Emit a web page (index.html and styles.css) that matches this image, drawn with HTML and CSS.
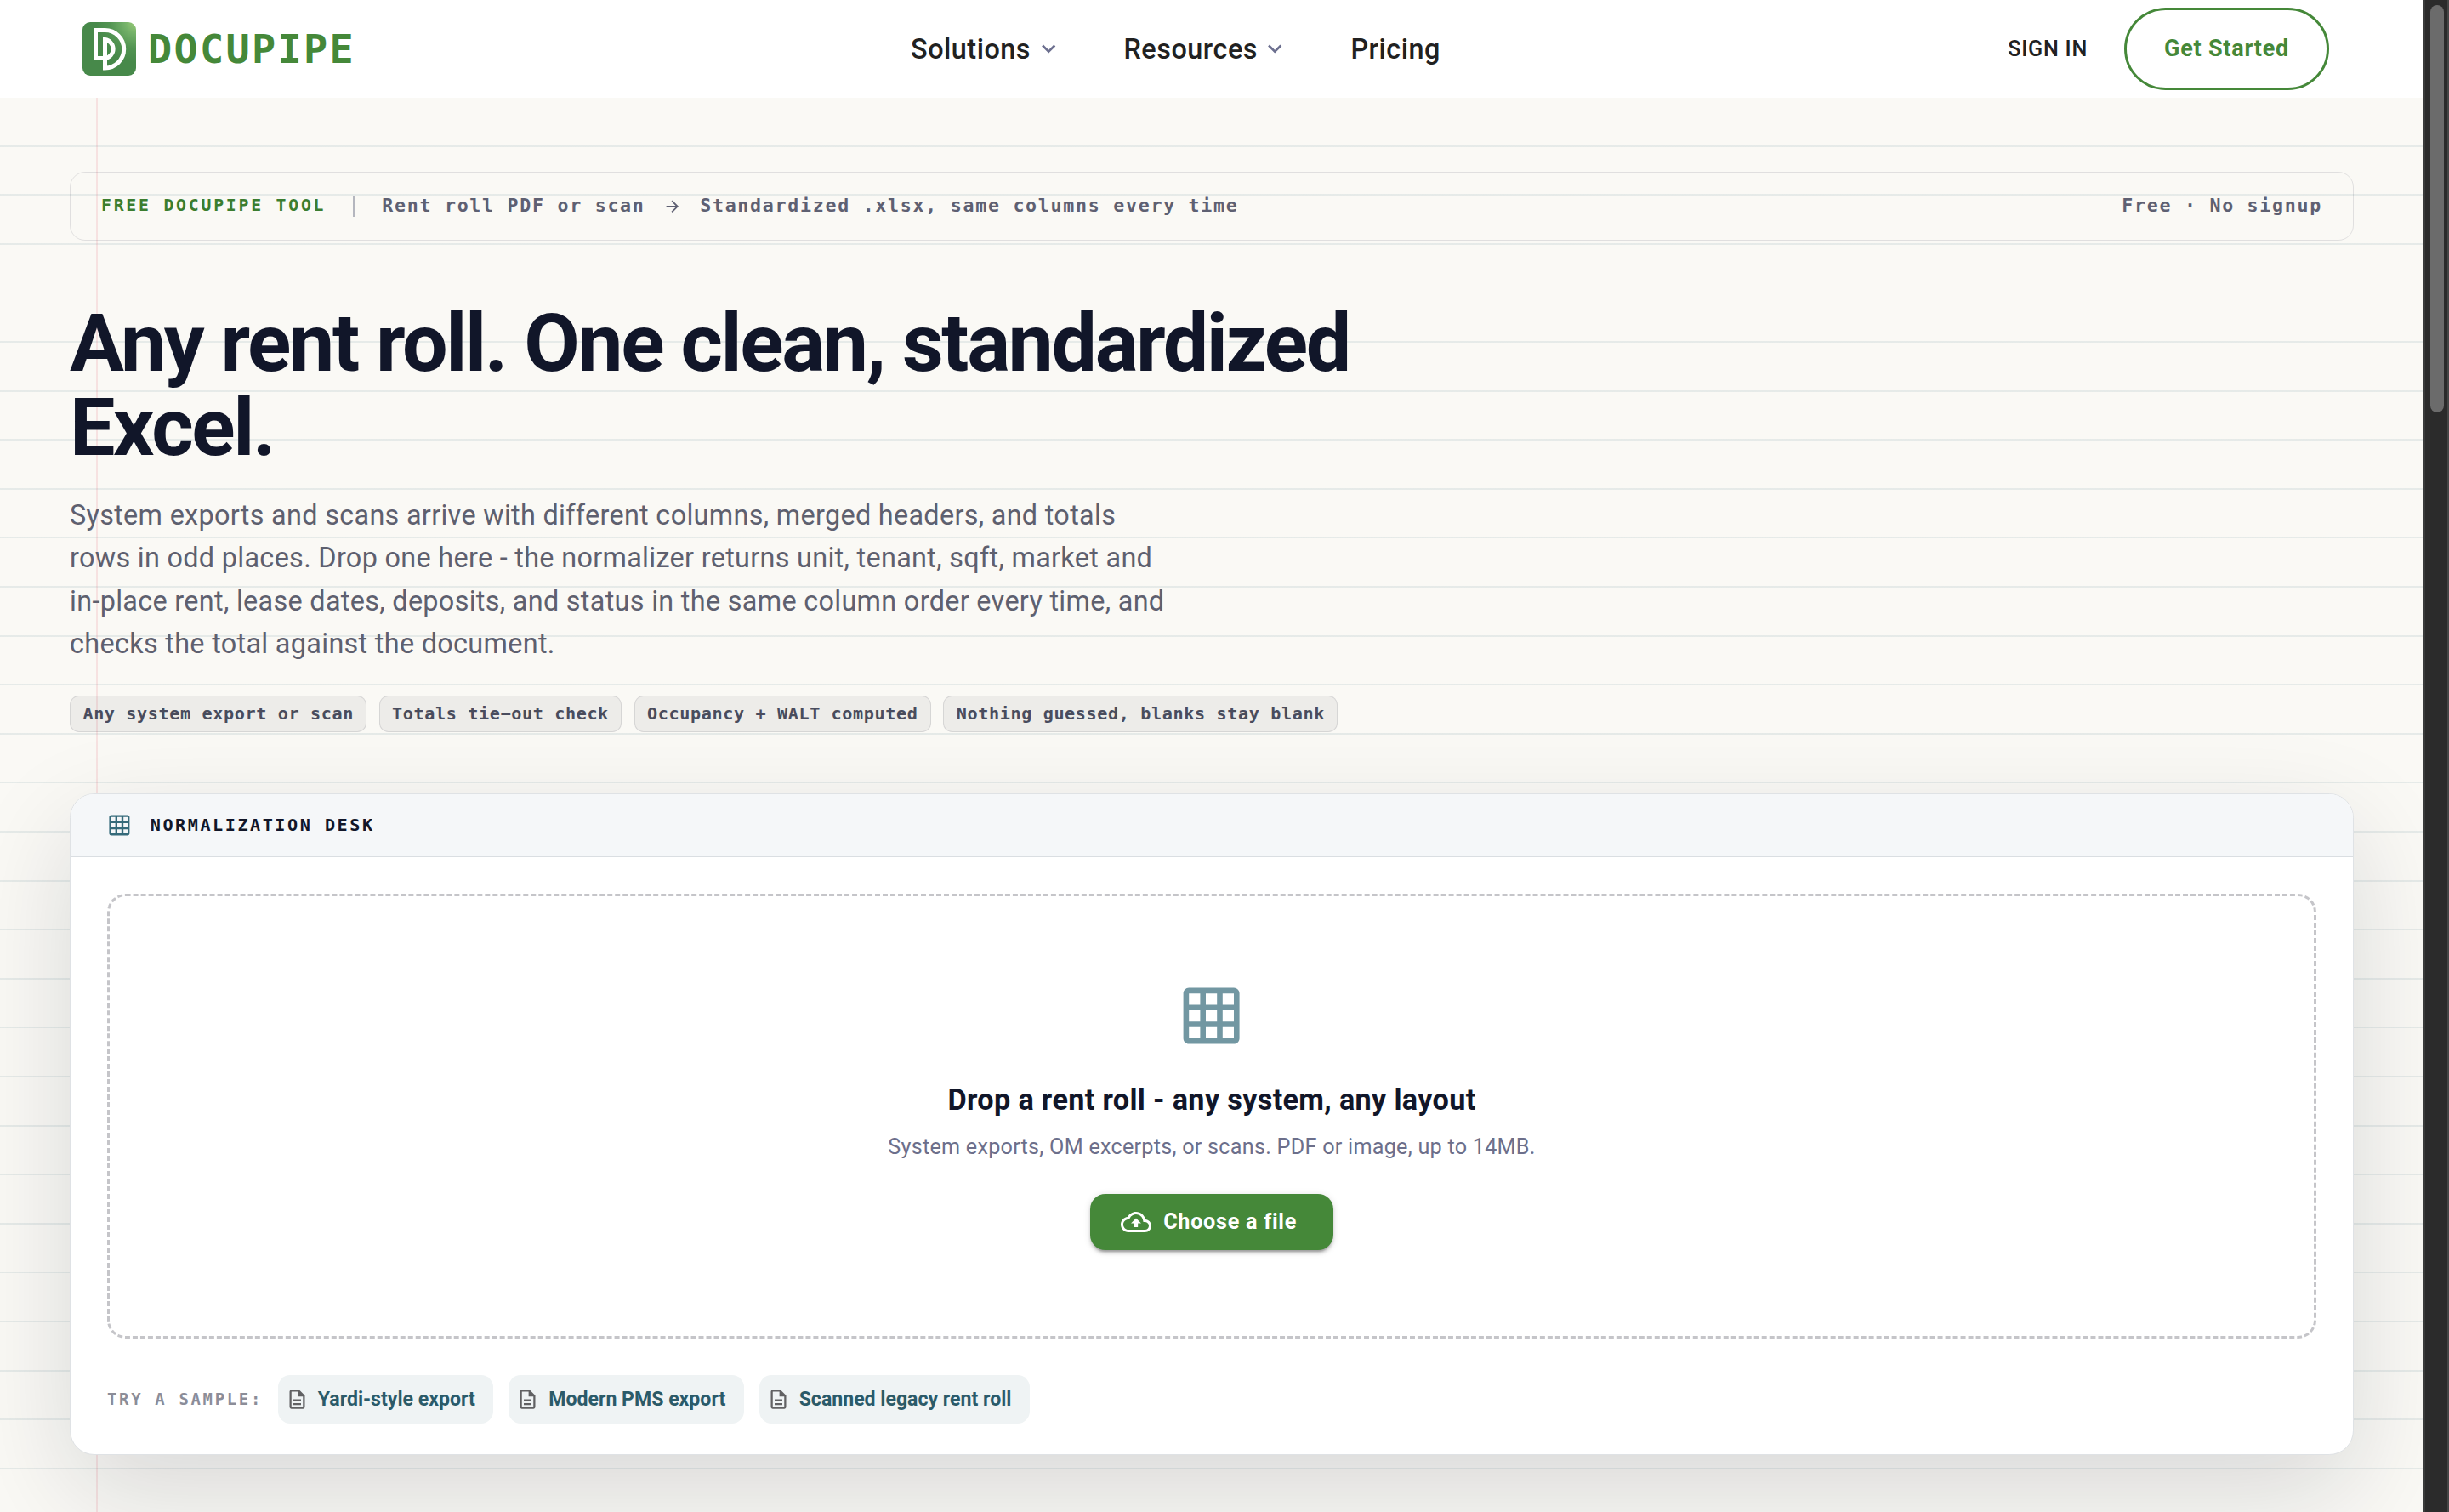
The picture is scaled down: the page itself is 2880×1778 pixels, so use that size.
FILE: index.html
```
<!DOCTYPE html>
<html lang="en">
<head>
<meta charset="UTF-8">
<meta name="viewport" content="width=device-width, initial-scale=1.0">
<title>Rent Roll Normalizer - DocuPipe</title>
<link rel="stylesheet" href="styles.css">
</head>
<body>
<div class="page">
    <header class="topbar">
        <a class="brand">
            <svg class="brand-mark" viewBox="0 0 63 63">
                <defs>
                    <radialGradient id="markFill" cx="1" cy="0" r="0.75">
                        <stop offset="0" stop-color="#9acb78"/>
                        <stop offset="0.3" stop-color="#72b068"/>
                        <stop offset="0.65" stop-color="#529452"/>
                        <stop offset="1" stop-color="#47894a"/>
                    </radialGradient>
                </defs>
                <rect width="63" height="63" rx="9" fill="url(#markFill)"/>
                <path d="M26.5 42.6H15.5V9.6H26.5A22.2 22.2 0 0 1 26.5 54V20.6A11.1 11.1 0 0 1 26.5 42.6" fill="none" stroke="#fff" stroke-width="5"/>
            </svg>
            <span class="brand-name">DOCUPIPE</span>
        </a>
        <nav class="menu">
            <a class="menu-item">Solutions
                <svg class="chevron" viewBox="0 0 24 24"><path d="M7.41 8.59 12 13.17l4.59-4.58L18 10l-6 6-6-6z"/></svg>
            </a>
            <a class="menu-item">Resources
                <svg class="chevron" viewBox="0 0 24 24"><path d="M7.41 8.59 12 13.17l4.59-4.58L18 10l-6 6-6-6z"/></svg>
            </a>
            <a class="menu-item">Pricing</a>
        </nav>
        <div class="account">
            <a class="sign-in">SIGN IN</a>
            <button class="get-started">Get Started</button>
        </div>
    </header>

    <main class="ledger">
        <div class="strip">
            <span class="strip-tag">FREE DOCUPIPE TOOL</span>
            <span class="strip-divider"></span>
            <span class="strip-text">Rent roll PDF or scan</span>
            <svg class="strip-arrow" viewBox="0 0 24 24"><path d="m12 4-1.41 1.41L16.17 11H4v2h12.17l-5.58 5.59L12 20l8-8z"/></svg>
            <span class="strip-text">Standardized .xlsx, same columns every time</span>
            <span class="strip-text strip-end">Free · No signup</span>
        </div>

        <h1>Any rent roll. One clean, standardized Excel.</h1>
        <p class="lead">System exports and scans arrive with different columns, merged headers, and totals rows in odd places. Drop one here - the normalizer returns unit, tenant, sqft, market and in-place rent, lease dates, deposits, and status in the same column order every time, and checks the total against the document.</p>

        <div class="facts">
            <span class="fact">Any system export or scan</span>
            <span class="fact">Totals tie−out check</span>
            <span class="fact">Occupancy + WALT computed</span>
            <span class="fact">Nothing guessed, blanks stay blank</span>
        </div>

        <section class="desk">
            <div class="desk-head">
                <svg class="desk-icon" viewBox="0 0 24 24"><path d="M20 2H4c-1.1 0-2 .9-2 2v16c0 1.1.9 2 2 2h16c1.1 0 2-.9 2-2V4c0-1.1-.9-2-2-2M8 20H4v-4h4zm0-6H4v-4h4zm0-6H4V4h4zm6 12h-4v-4h4zm0-6h-4v-4h4zm0-6h-4V4h4zm6 12h-4v-4h4zm0-6h-4v-4h4zm0-6h-4V4h4z"/></svg>
                <span>NORMALIZATION DESK</span>
            </div>
            <div class="desk-body">
                <div class="dropzone">
                    <svg class="drop-icon" viewBox="0 0 24 24"><path d="M20 2H4c-1.1 0-2 .9-2 2v16c0 1.1.9 2 2 2h16c1.1 0 2-.9 2-2V4c0-1.1-.9-2-2-2M8 20H4v-4h4zm0-6H4v-4h4zm0-6H4V4h4zm6 12h-4v-4h4zm0-6h-4v-4h4zm0-6h-4V4h4zm6 12h-4v-4h4zm0-6h-4v-4h4zm0-6h-4V4h4z"/></svg>
                    <h2>Drop a rent roll - any system, any layout</h2>
                    <p class="drop-hint">System exports, OM excerpts, or scans. PDF or image, up to 14MB.</p>
                    <button class="choose">
                        <svg class="choose-icon" viewBox="0 0 24 24"><path d="M19.35 10.04C18.67 6.59 15.64 4 12 4 9.11 4 6.6 5.64 5.35 8.04 2.34 8.36 0 10.91 0 14c0 3.31 2.69 6 6 6h13c2.76 0 5-2.24 5-5 0-2.64-2.05-4.78-4.65-4.96M19 18H6c-2.21 0-4-1.79-4-4 0-2.05 1.53-3.76 3.56-3.97l1.07-.11.5-.95C8.08 7.14 9.94 6 12 6c2.62 0 4.88 1.86 5.39 4.43l.3 1.5 1.53.11c1.56.1 2.78 1.41 2.78 2.96 0 1.65-1.35 3-3 3M8 13h2.55v3h2.9v-3H16l-4-4z"/></svg>
                        <span>Choose a file</span>
                    </button>
                </div>
                <div class="samples">
                    <span class="samples-label">TRY A SAMPLE:</span>
                    <a class="sample">
                        <svg class="sample-icon" viewBox="0 0 24 24"><path d="M8 16h8v2H8zm0-4h8v2H8zm6-10H6c-1.1 0-2 .9-2 2v16c0 1.1.89 2 1.99 2H18c1.1 0 2-.9 2-2V8zm4 18H6V4h7v5h5z"/></svg>
                        <span>Yardi-style export</span>
                    </a>
                    <a class="sample">
                        <svg class="sample-icon" viewBox="0 0 24 24"><path d="M8 16h8v2H8zm0-4h8v2H8zm6-10H6c-1.1 0-2 .9-2 2v16c0 1.1.89 2 1.99 2H18c1.1 0 2-.9 2-2V8zm4 18H6V4h7v5h5z"/></svg>
                        <span>Modern PMS export</span>
                    </a>
                    <a class="sample">
                        <svg class="sample-icon" viewBox="0 0 24 24"><path d="M8 16h8v2H8zm0-4h8v2H8zm6-10H6c-1.1 0-2 .9-2 2v16c0 1.1.89 2 1.99 2H18c1.1 0 2-.9 2-2V8zm4 18H6V4h7v5h5z"/></svg>
                        <span>Scanned legacy rent roll</span>
                    </a>
                </div>
            </div>
        </section>
    </main>
</div>
<div class="scrollbar"><div class="scroll-thumb"></div></div>
</body>
</html>
```
FILE: styles.css
```
* { margin: 0; padding: 0; box-sizing: border-box; }
body {
    display: flex;
    height: 1778px;
    overflow: hidden;
    background: #faf9f5;
    font-family: Roboto, "Liberation Sans", sans-serif;
    color: #111629;
}
button { font-family: inherit; cursor: pointer; }
svg { display: block; flex-shrink: 0; }
.page {
    flex: 1;
    display: flex;
    flex-direction: column;
    overflow: hidden;
}

/* top bar */
.topbar {
    display: grid;
    grid-template-columns: 974px 1fr auto;
    align-items: center;
    flex-shrink: 0;
    height: 115px;
    padding: 0 111px 0 97px;
    background: #fff;
}
.brand { display: flex; align-items: center; gap: 14px; }
.brand-mark { width: 63px; height: 63px; }
.brand-name {
    font: bold 46.8px/56px "DejaVu Sans Mono", monospace;
    letter-spacing: 0.05em;
    color: #458839;
}
.menu { display: flex; gap: 72.5px; }
.menu-item {
    display: flex; align-items: center; gap: 4.5px;
    font-size: 32.4px; font-weight: 500;
    letter-spacing: 0.016em;
    color: #212121;
}
.chevron { width: 32.4px; height: 32.4px; fill: #6c6f8f; }
.account { display: flex; align-items: center; gap: 43px; }
.sign-in {
    font-size: 25.2px; font-weight: 500;
    letter-spacing: 0.0286em;
    color: #212121;
}
.get-started {
    width: 241px; height: 97px;
    padding-bottom: 1px;
    border: 3px solid #458839; border-radius: 49px;
    background: #fff; color: #458839;
    font-size: 27px; font-weight: 700;
    letter-spacing: 0.0286em;
}

/* ruled paper */
.ledger {
    flex: 1;
    padding: 87px 82px 0;
    background:
        linear-gradient(90deg, transparent 113px, rgba(225, 70, 90, 0.13) 113px, rgba(225, 70, 90, 0.13) 115px, transparent 115px),
        repeating-linear-gradient(180deg, transparent 0, transparent 55.8px, rgba(53, 106, 122, 0.1) 55.8px, rgba(53, 106, 122, 0.1) 57.6px),
        #faf9f5;
}
.strip {
    display: flex; align-items: center;
    height: 81px;
    padding: 0 36px 2px;
    border: 1px solid rgba(17, 22, 41, 0.11); border-radius: 18px;
    font-family: "DejaVu Sans Mono", monospace;
    font-weight: bold;
}
.strip-tag { font-size: 19.8px; letter-spacing: 0.14em; color: #3b7d2f; }
.strip-divider { width: 2px; height: 25px; margin: 2px 32px 0; background: #b4b6be; }
.strip-text { font-size: 21.6px; letter-spacing: 0.08em; color: #5e6072; }
.strip-arrow { width: 21.6px; height: 21.6px; margin: 2px 22px 0 21px; fill: #5e6072; }
.strip-end { margin-left: auto; }

h1 {
    max-width: 1620px;
    margin-top: 71px;
    font-size: 95.04px; font-weight: 700;
    line-height: 99px;
    letter-spacing: -0.025em;
}
.lead {
    max-width: 1296px;
    margin-top: 29px;
    font-size: 32.4px;
    line-height: 50.4px;
    letter-spacing: 0.0095em;
    color: #5e606f;
}
.facts { display: flex; gap: 14.4px; margin-top: 35px; }
.fact {
    height: 43px;
    padding: 0 14.4px;
    border: 1px solid rgba(17, 22, 41, 0.1); border-radius: 10.8px;
    background: rgba(17, 22, 41, 0.055);
    font: bold 20.16px/41px "DejaVu Sans Mono", monospace;
    letter-spacing: 0.03em;
    color: #494c5d;
}

/* normalization desk */
.desk {
    margin-top: 72px;
    border: 1px solid #dfe2e5; border-radius: 28.8px;
    background: #fff;
    box-shadow: 0 43px 126px rgba(17, 22, 41, 0.14);
    overflow: hidden;
}
.desk-head {
    display: flex; align-items: center; gap: 22px;
    height: 74px;
    padding: 0 43px;
    border-bottom: 1px solid #dadee2;
    background: #f5f7f9;
    font: bold 20.16px/24px "DejaVu Sans Mono", monospace;
    letter-spacing: 2.52px;
}
.desk-icon { width: 28.8px; height: 28.8px; fill: #356a7a; }
.desk-body { padding: 43px 43px 36px; }
.dropzone {
    display: flex; flex-direction: column; align-items: center;
    height: 523px;
    padding-top: 101px;
    border: 3px dashed #c5c5c9; border-radius: 21.6px;
}
.drop-icon { width: 79.2px; height: 79.2px; fill: #7297a2; }
.dropzone h2 {
    margin-top: 36px;
    font-size: 34.2px; font-weight: 700;
    line-height: 46px;
    letter-spacing: 0.01em;
}
.drop-hint {
    margin-top: 15px;
    font-size: 25.2px; line-height: 36px;
    letter-spacing: 0.01em;
    color: #6c6f8b;
}
.choose {
    display: flex; align-items: center; gap: 14.4px;
    height: 66px;
    margin-top: 37px;
    padding: 0 43.2px 0 36px;
    border: none; border-radius: 18px;
    background: #458839; color: #fff;
    font-size: 25.2px; font-weight: 700;
    letter-spacing: 0.0286em;
    box-shadow: 0 5.4px 1.8px -3.6px rgba(0,0,0,0.2), 0 3.6px 3.6px rgba(0,0,0,0.14), 0 1.8px 9px rgba(0,0,0,0.12);
}
.choose-icon { width: 36px; height: 36px; fill: #fff; }
.samples { display: flex; align-items: center; gap: 18px; margin-top: 43px; }
.samples-label {
    font: bold 18.9px/24px "DejaVu Sans Mono", monospace;
    letter-spacing: 2.7px;
    color: #8b8d99;
}
.sample {
    display: flex; align-items: center; gap: 10.8px;
    height: 57px;
    padding: 0 21.6px 0 9px;
    border-radius: 14.4px;
    background: #eff3f4;
    font-size: 23.1px; font-weight: 700;
    color: #2b5a69;
}
.sample-icon { width: 27px; height: 27px; fill: #616163; }

/* scrollbar */
.scrollbar {
    width: 30px;
    padding: 6px 4px 0 6px;
    border-left: 2px solid #3a3b3b; border-right: 2px solid #454646;
    background: #2b2b2b;
}
.scroll-thumb { width: 16px; height: 479px; border-radius: 8px; background: #6b6b6b; }
```
